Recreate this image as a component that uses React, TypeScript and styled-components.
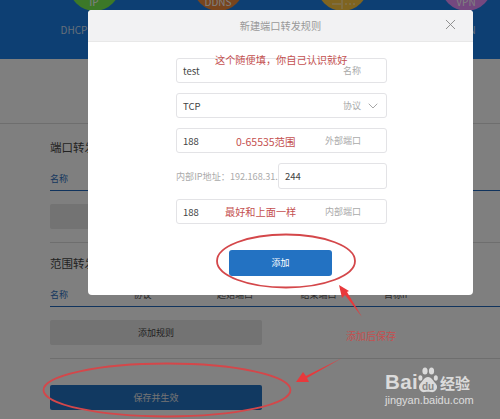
import { createGlobalStyle } from "styled-components";
import styled from "styled-components";
import { ChevronDown, X } from "lucide-react";

const FONT = `"Noto Sans CJK SC", "Noto Sans", sans-serif`;

const Global = createGlobalStyle`
  html, body { margin: 0; padding: 0; background: #fff; }
  body { font-family: ${FONT}; }
  * { box-sizing: border-box; }
`;

const Page = styled.div`
  position: relative;
  width: 500px;
  height: 419px;
  overflow: hidden;
  background: #fff;
`;

const Header = styled.header`
  height: 59px;
  background: #1a7fe6;
  overflow: hidden;
`;

const NavRow = styled.div`
  display: flex;
  width: 620px;
  margin-left: 32px;
  margin-top: -40px;
`;

const NavItem = styled.div`
  width: 124px;
  flex: none;
  display: flex;
  flex-direction: column;
  align-items: center;
`;

const Circle = styled.div<{ $color: string }>`
  width: 51px;
  height: 51px;
  border-radius: 50%;
  background: ${(p) => p.$color};
  color: #fff;
  font-size: 10px;
  line-height: 14px;
  display: flex;
  align-items: flex-end;
  justify-content: center;
  padding-bottom: 2px;
`;

const NavLabel = styled.div`
  margin-top: 12px;
  font-size: 10px;
  line-height: 14px;
  color: #c9def4;
  white-space: nowrap;
`;

const Band = styled.div`
  height: 65px;
  border-bottom: 1px solid #ddd;
`;

const Content = styled.main`
  padding-left: 50px;
`;

const Block = styled.section<{ $top: number }>`
  padding-top: ${(p) => p.$top}px;
  padding-bottom: 13px;
  border-bottom: 1px solid #ddd;
`;

const BlockTitle = styled.h3`
  margin: 0;
  height: 18px;
  font-size: 11.5px;
  line-height: 18px;
  font-weight: 400;
  color: #444;
`;

const TableHead = styled.div`
  display: flex;
  margin-top: 16px;
  width: 450px;
  height: 19px;
  border-bottom: 1px solid #2067ba;
  font-size: 9px;
  line-height: 14px;
`;

const HeadCell = styled.div<{ $first?: boolean }>`
  width: 83.5px;
  flex: none;
  color: ${(p) => (p.$first ? "#2e6fc0" : "#555")};
`;

const RuleButton = styled.div`
  margin-top: 13px;
  width: 212px;
  height: 25px;
  border-radius: 2px;
  background: #e6e6e6;
  color: #444;
  font-size: 9px;
  line-height: 25px;
  text-align: center;
`;

const SaveButton = styled.div`
  margin-top: 26px;
  width: 212px;
  height: 25px;
  border-radius: 2px;
  background: #2372c2;
  color: #e8e8e8;
  font-size: 9px;
  line-height: 25px;
  text-align: center;
`;

const Dim = styled.div`
  position: absolute;
  inset: 0;
  background: rgba(0, 0, 0, 0.5);
`;

const Modal = styled.div`
  position: absolute;
  left: 88px;
  top: 10px;
  width: 385px;
  height: 285px;
  border-radius: 4px;
  background: #fff;
  overflow: hidden;
`;

const ModalHead = styled.div`
  position: relative;
  height: 32px;
  background: #f2f2f3;
  border-bottom: 1px solid #e8e8e8;
  color: #999;
  font-size: 10.2px;
  line-height: 31px;
  text-align: center;
`;

const CloseIcon = styled(X)`
  position: absolute;
  right: 14px;
  top: 6px;
  color: #888;
`;

const Form = styled.div`
  width: 211px;
  margin: 16px 0 0 88px;
  display: flex;
  flex-direction: column;
  gap: 10px;
`;

const Field = styled.div`
  height: 25px;
  border: 1px solid #e3e3e6;
  border-radius: 3px;
  padding: 0 25px 0 6px;
  display: flex;
  align-items: center;
  justify-content: space-between;
  font-size: 9.5px;
  color: #444;
`;

const FieldHint = styled.span`
  font-size: 9px;
  color: #aaa;
`;

const SelectIcon = styled(ChevronDown)`
  position: absolute;
  right: 5px;
  top: 4px;
  color: #999;
`;

const SelectField = styled(Field)`
  position: relative;
`;

const IpRow = styled.div`
  display: flex;
  align-items: center;
  justify-content: space-between;
  height: 26px;
  font-size: 9.1px;
  color: #aaa;
  white-space: nowrap;
`;

const IpField = styled(Field)`
  width: 109px;
  height: 26px;
  font-size: 9.5px;
`;

const AddButton = styled.div`
  width: 103px;
  height: 26px;
  margin: 26px 0 0 141px;
  border-radius: 3px;
  background: #2372c2;
  color: #fff;
  font-size: 9px;
  line-height: 26px;
  text-align: center;
`;

const Note = styled.div<{ $x: number; $y: number; $size: number }>`
  position: absolute;
  left: ${(p) => p.$x}px;
  top: ${(p) => p.$y}px;
  font-size: ${(p) => p.$size}px;
  line-height: 14px;
  color: #c4504f;
  white-space: nowrap;
`;

const Marks = styled.svg`
  position: absolute;
  left: 0;
  top: 0;
`;

const Watermark = styled.div`
  position: absolute;
  left: 385px;
  top: 367px;
  width: 92px;
  color: #fff;
  opacity: 0.72;
`;

const LogoRow = styled.div`
  display: flex;
  align-items: flex-end;
  height: 26px;
`;

const LogoWord = styled.span`
  font-family: "Liberation Sans", sans-serif;
  font-size: 20.5px;
  line-height: 22px;
  font-weight: 700;
  letter-spacing: 0.4px;
`;

const LogoCn = styled.span`
  font-size: 15px;
  line-height: 20px;
  font-weight: 700;
  margin-left: 2px;
`;

const LogoUrl = styled.div`
  font-family: "Liberation Sans", sans-serif;
  font-size: 11px;
  line-height: 12px;
  margin-top: 1px;
  white-space: nowrap;
`;

const navItems = [
  { color: "#78f050", icon: "IP", label: "DHCP静态绑定" },
  { color: "#f08a3c", icon: "DDNS", label: "DDNS" },
  { color: "#ffc840", icon: "", label: "端口转发" },
  { color: "#e890ff", icon: "VPN", label: "VPN" },
];

const columns = ["名称", "协议", "起始端口", "结束端口", "目标IP"];

function TableHeader() {
  return (
    <TableHead>
      {columns.map((c, i) => (
        <HeadCell key={c} $first={i === 0}>
          {c}
        </HeadCell>
      ))}
    </TableHead>
  );
}

// the third circle shows a split-arrow glyph, only its lower part is in view
function ForwardGlyph() {
  return (
    <svg width="30" height="14" viewBox="0 0 30 14" fill="none" stroke="#fff" strokeOpacity={0.7}>
      <path d="M15 0 V14" />
      <path d="M5 9 H14 M18 9 H20 M22 9 H24 M26 9 H28" />
    </svg>
  );
}

export default function App() {
  return (
    <Page>
      <Global />
      <Header>
        <NavRow>
          {navItems.map((n) => (
            <NavItem key={n.label}>
              <Circle $color={n.color}>{n.icon || <ForwardGlyph />}</Circle>
              <NavLabel>{n.label}</NavLabel>
            </NavItem>
          ))}
        </NavRow>
      </Header>
      <Band />
      <Content>
        <Block $top={14}>
          <BlockTitle>端口转发</BlockTitle>
          <TableHeader />
          <RuleButton>添加规则</RuleButton>
        </Block>
        <Block $top={11}>
          <BlockTitle>范围转发</BlockTitle>
          <TableHeader />
          <RuleButton>添加规则</RuleButton>
        </Block>
        <SaveButton>保存并生效</SaveButton>
      </Content>

      <Dim />

      <Modal>
        <ModalHead>
          新建端口转发规则
          <CloseIcon size={17} strokeWidth={1.3} />
        </ModalHead>
        <Form>
          <Field>
            test<FieldHint>名称</FieldHint>
          </Field>
          <SelectField>
            TCP<FieldHint>协议</FieldHint>
            <SelectIcon size={16} strokeWidth={1.3} />
          </SelectField>
          <Field>
            188<FieldHint>外部端口</FieldHint>
          </Field>
          <IpRow>
            {"内部IP地址\uFF1A192.168.31."}
            <IpField>244</IpField>
          </IpRow>
          <Field>
            188<FieldHint>内部端口</FieldHint>
          </Field>
        </Form>
        <AddButton>添加</AddButton>
      </Modal>

      <Note $x={215} $y={53} $size={10.2}>{"这个随便填\uFF0C你自己认识就好"}</Note>
      <Note $x={236} $y={135} $size={10.5}>0-65535范围</Note>
      <Note $x={225} $y={205} $size={10.2}>最好和上面一样</Note>
      <Note $x={346} $y={329} $size={10}>添加后保存</Note>

      <Marks width={500} height={419} viewBox="0 0 500 419" fill="none">
        <ellipse cx={286} cy={261} rx={69} ry={26.5} stroke="#d4474a" strokeWidth={1.8} />
        <ellipse cx={167} cy={390} rx={123.5} ry={26.5} stroke="#d4474a" strokeWidth={1.8} />
        <path d="M339 285 L349 291 L347 292 L362 317 L345 295 L342 298 Z" fill="#e8393c" />
        <path d="M342 358 L306 376 L303 372 L296 382 L309 382 L307 378 Z" fill="#e8393c" />
      </Marks>

      <Watermark>
        <LogoRow>
          <LogoWord>Bai</LogoWord>
          <svg width="20" height="26" viewBox="0 0 20 26">
            <ellipse cx="2.4" cy="11" rx="2" ry="2.8" fill="#fff" />
            <ellipse cx="7" cy="4" rx="2.6" ry="3.6" fill="#fff" />
            <ellipse cx="13.5" cy="4" rx="2.6" ry="3.6" fill="#fff" />
            <ellipse cx="17.8" cy="11" rx="2" ry="2.8" fill="#fff" />
            <path d="M10 10 C14 10 15 14 18 17 C21 21 17 26 13 25 C11 24.5 9 24.5 7 25 C3 26 -1 21 2 17 C5 14 6 10 10 10 Z" fill="#fff" />
            <text x="10" y="23" textAnchor="middle" fontFamily="Liberation Sans, sans-serif" fontSize="10" fontWeight="700" fill="#8a8a8a">du</text>
          </svg>
          <LogoCn>经验</LogoCn>
        </LogoRow>
        <LogoUrl>jingyan.baidu.com</LogoUrl>
      </Watermark>
    </Page>
  );
}
